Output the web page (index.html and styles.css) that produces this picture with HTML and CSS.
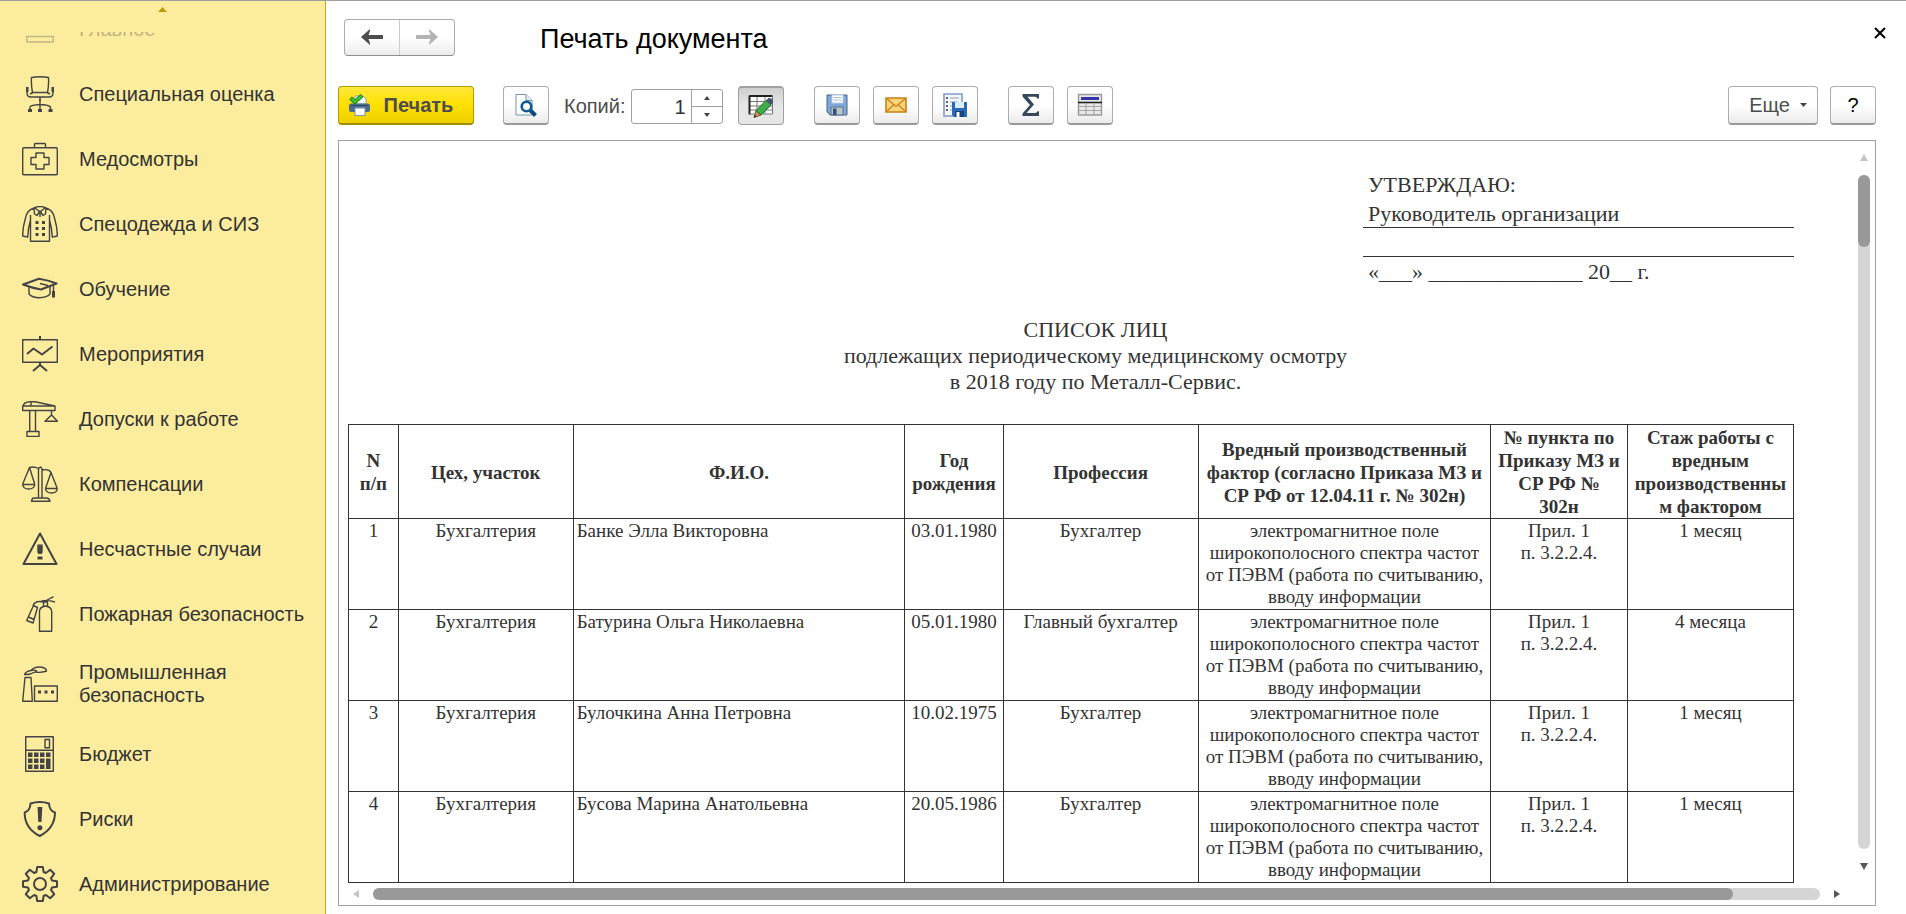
FILE: index.html
```html
<!DOCTYPE html>
<html lang="ru">
<head>
  <meta charset="UTF-8">
  <title>Печать документа</title>
  <link rel="stylesheet" href="styles.css">
</head>
<body>
  <nav class="sidebar">
    <button class="scroll-up" aria-label="Вверх"><svg width="9" height="5" viewBox="0 0 9 5"><path d="M0 5L4.500 0L9 5z"/></svg></button>
    <div class="menu">
      <a class="item faded" href="#">
        <svg viewBox="0 0 36 36"><path d="M5 2h26v16H5zM4.700 25.500h26.600V31H4.700z"/></svg>
        <span>Главное</span>
      </a>
      <a class="item" href="#">
        <svg viewBox="0 0 36 36"><path d="M9.500 1.500Q9 9 10.500 16.500H25.500Q27 9 26.500 1.500Q18 0 9.500 1.500zM5 12v5q0 4 4 4h18q4 0 4-4v-5M8 18l3-1.500M28 18l-3-1.500M18 21v8M17 24h2M8 33v-2Q9 29 18 28.500Q27 29 28.500 31v2M18 28v5"/><path class="fill" d="M4 11h2.500v5H4zM29.500 11H32v5h-2.500zM6 33h4v3H6zM16 33h4v3h-4zM26.500 33h4v3h-4z"/></svg>
        <span>Специальная оценка</span>
      </a>
      <a class="item" href="#">
        <svg viewBox="0 0 36 36"><path d="M1.700 6.700h32.600q1 0 1 1v25q0 1-1 1H1.700q-1 0-1-1v-25q0-1 1-1zM12.500 6V3.500q0-1 1-1h9q1 0 1 1V6M14 12h8v4.500h5v7h-5V28h-8v-4.500H9v-7h5z"/></svg>
        <span>Медосмотры</span>
      </a>
      <a class="item" href="#">
        <svg viewBox="0 0 36 36"><path d="M12 2Q5 4 3.500 12Q.500 22 .700 30l5 1Q6 22 8.500 14M24 2Q31 4 32.500 12Q35.500 22 35.300 30l-5 1Q30 22 27.500 14M8.500 9v26.300h19V9M12 2q6-3 12 0M12 2l.500 6 2.500 1.500 3-4.500 3 4.500L23.500 8 24 2M13 2l5 4 5-4M18 6v5"/><path class="fill" d="M13.500 15h3v3h-3zM20 15h3v3h-3zM13.500 21h3v3h-3zM20 21h3v3h-3zM13.500 27h3v3h-3zM20 27h3v3h-3z"/></svg>
        <span>Спецодежда и СИЗ</span>
      </a>
      <a class="item" href="#">
        <svg viewBox="0 0 36 36"><path class="bold" d="M1 13.500L17 7.700Q26 9 34.500 12.500L19 18.500Q10 17 1 13.500z"/><path d="M7 16v7q3 3.700 10.500 3.700Q25 26.500 28 23v-7.500M18 12.500l8 2M31.500 14.500V20"/><path class="fill" d="M30 20h3v6.500h-3z"/></svg>
        <span>Обучение</span>
      </a>
      <a class="item" href="#">
        <svg viewBox="0 0 36 36"><path d="M.700 3.700h34.600v22.600H.700z"/><path class="bold" d="M18 0v3.500M18 26.500v3M11 35l7-6 7 6M5 18l6.500-5.500 8.500 6 10.500-8"/></svg>
        <span>Мероприятия</span>
      </a>
      <a class="item" href="#">
        <svg viewBox="0 0 36 36"><path d="M.700 5h32.300v4.500H.700zM1 5Q2 1 8 .700h5L33 5M9 1v4M7.700 9.500v21M13.500 9.500v21M5 30.500h12v5H5zM29.500 9.500v4.500L23 20.300h12.500L29.500 14"/></svg>
        <span>Допуски к работе</span>
      </a>
      <a class="item" href="#">
        <svg viewBox="0 0 36 36"><path d="M16.500 32V2.500l1.800-1.500L20 2.500V32M12 32h12.500q3 0 3.500 3.300H9.500Q10 32 12 32zM16.500 2.500Q12 0 7.500 1.500L.700 18M7.500 1.500L12.700 18M.700 18.500h12q-.500 4.500-6 4.500t-6-4.500zM20 4q7-1.500 9 2.500l-5.500 16M29 6.500l6.300 16M23.500 22.500h11.800q-.300 4.500-5.800 4.500t-6-4.500z"/></svg>
        <span>Компенсации</span>
      </a>
      <a class="item" href="#">
        <svg viewBox="0 0 36 36"><path class="bold" d="M18 2.500L34.500 33H1.500z"/><path class="fill" d="M15.300 13.500h5.400V21l-1 2h-3.400l-1-2zM15.500 25.500h5v3h-5z"/></svg>
        <span>Несчастные случаи</span>
      </a>
      <a class="item" href="#">
        <svg viewBox="0 0 36 36"><path d="M17.500 35.300V15.500Q17.500 11 23.500 10Q29.700 11 29.700 15.500v19.800zM21.500 10V6h4v4M4.700 24.500L11.500 9.500l4 2L11 27zM6.500 21l5.500 2.500M11 9.500Q13 4 21.500 6L31.500.700M19 5.500Q24 3 33 6"/></svg>
        <span>Пожарная безопасность</span>
      </a>
      <a class="item" href="#">
        <svg viewBox="0 0 36 36"><path d="M3 11.500h6L10.300 35.300H.700zM12.500 20h22.800v15.300H12.500zM2.500 8.500Q4 5 9 4.500Q12 .700 18 1Q24.500 1.500 24.500 5Q19 7 13 6Q8 9 2.500 8.500zM9 4.500q4-1 6 .500"/><path class="fill" d="M16 24.500h3v3h-3zM22.500 24.500h3v3h-3zM29 24.500h3v3h-3z"/></svg>
        <span>Промышленная безопасность</span>
      </a>
      <a class="item" href="#">
        <svg viewBox="0 0 36 36"><path d="M3.700 .700h27.600v34.600H3.700zM4 14.300h27M23 3.500h4.500v8.300H23z"/><path class="fill" d="M6 16.500h4.500v4.500H6zM12 16.500h4.500v4.500H12zM18 16.500h4.500v4.500H18zM24 16.500h4.500v4.500H24zM6 22.500h4.500V27H6zM12 22.500h4.500V27H12zM18 22.500h4.500V27H18zM24 22.500h4.500V33H24zM6 28.500h4.500V33H6zM12 28.500h4.500V33H12zM18 28.500h4.500V33H18z"/></svg>
        <span>Бюджет</span>
      </a>
      <a class="item" href="#">
        <svg viewBox="0 0 36 36"><path class="bold" d="M17.700 35Q2.500 27 2.700 11.500Q8 10 8.500 2.500Q18-.500 27 2.500Q27.500 10 33 11.500Q33 27 17.700 35z"/><path class="fill" d="M15.500 6h4.800l-.800 15h-3.200z"/><circle class="fill" cx="17.900" cy="26.800" r="2.500"/></svg>
        <span>Риски</span>
      </a>
      <a class="item" href="#">
        <svg viewBox="0 0 36 36"><path class="bold" d="M14.400 6L15.200 1H20.800L21.600 6L23.900 7L28.200 3.800L32.200 7.800L29 12.100L30 14.400L35 15.200V20.800L30 21.600L29 23.900L32.200 28.200L28.200 32.200L23.900 29L21.600 30L20.800 35H15.200L14.400 30L12.100 29L7.800 32.200L3.800 28.200L7 23.900L6 21.600L1 20.800V15.200L6 14.400L7 12.100L3.800 7.800L7.800 3.800L12.100 7z"/><circle class="bold" cx="18" cy="18" r="6"/></svg>
        <span>Администрирование</span>
      </a>
    </div>
  </nav>

  <main class="content">
    <header class="header">
      <div class="history">
        <button aria-label="Назад"><svg width="22" height="16" viewBox="0 0 22 16"><path fill="#4d4d4d" d="M0 8l9-8v2L7.500 6H22v4H7.500L9 14v2z"/></svg></button>
        <button aria-label="Вперед"><svg width="22" height="16" viewBox="0 0 22 16"><path fill="#b3b3b3" d="M22 8l-9-8v2l1.500 4H0v4h14.500L13 14v2z"/></svg></button>
      </div>
      <h1>Печать документа</h1>
      <button class="close" aria-label="Закрыть"><svg width="12" height="12" viewBox="0 0 12 12"><path d="M1 1l10 10M11 1L1 11" stroke="#000" stroke-width="2"/></svg></button>
    </header>

    <div class="toolbar">
      <button class="btn print">
        <svg width="22" height="22" viewBox="0 0 22 22"><path d="M6 10V2h8l3 3v5z" fill="#fff" stroke="#8aa0b5"/><rect y="9.500" width="21" height="8.500" rx="2" fill="#4a6c92"/><path d="M2 11.500h17" stroke="#2c4868"/><path d="M6 14h10v7.500H6z" fill="#fff" stroke="#7c93ab"/><path d="M1.500 4l4.500 4 7-6.500" fill="none" stroke="#1c7c12" stroke-width="4"/><path d="M2 4.300l4 3.500 6.500-6" fill="none" stroke="#3fc52e" stroke-width="2.400"/></svg>
        Печать
      </button>
      <button class="btn preview" aria-label="Просмотр">
        <svg width="22" height="24" viewBox="0 0 22 24"><path d="M1 1.500h10l6 6v14.500H1z" fill="#fff" stroke="#7590ad"/><path d="M11 1.500v6h6" fill="#e8eef5" stroke="#7590ad"/><path d="M15 17l5.500 5.500" stroke="#0c4a7e" stroke-width="4"/><circle cx="11.500" cy="13.500" r="4.800" fill="#fff" stroke="#0c5a94" stroke-width="2.600"/></svg>
      </button>
      <label for="copies">Копий:</label>
      <div class="spinner">
        <input id="copies" type="text" value="1">
        <div class="steps">
          <button aria-label="Больше"><svg width="6" height="4" viewBox="0 0 6 4"><path d="M0 4l3-4 3 4z"/></svg></button>
          <button aria-label="Меньше"><svg width="6" height="4" viewBox="0 0 6 4"><path d="M0 0l3 4 3-4z"/></svg></button>
        </div>
      </div>
      <button class="btn pressed" aria-label="Редактирование">
        <svg width="26" height="24" viewBox="0 0 26 24"><path d="M1.500 2h23v18h-23z" fill="#fff"/><path d="M2 7.500h22M2 12h22M2 16h22M9 2v18M17 2v18" stroke="#777"/><path d="M1.500 2h23M1.500 1.500v19" stroke="#222" stroke-width="2"/><path d="M1 20h10M24.500 2v18H14" fill="none" stroke="#777"/><path d="M6 23.500l2-7 5 4.500z" fill="#c9915c" stroke="#7a5432"/><path d="M8 16.500L18 6.500l5 4.500-10 10z" fill="#3fae49" stroke="#1f6e2a"/><path d="M18 6.500l2.500-2.500q3-.500 4 1.500l.500 3-2 2.500z" fill="#46566a"/><path d="M6 23.500l.800-2.500 1.700 1.500z" fill="#222"/></svg>
      </button>
      <div class="group">
        <button class="btn" aria-label="Сохранить">
          <svg width="22" height="22" viewBox="0 0 22 22"><path d="M1 1h20v20H4l-3-3z" fill="#7ea8d8" stroke="#44668f"/><path d="M6 1h11v8H6z" fill="#fff" stroke="#b9cde4"/><path d="M7.500 3.500h8M7.500 6h8" stroke="#a9bdd2"/><path d="M5 13h12v8H5z" fill="#bcc4cc" stroke="#5c718a"/><path d="M7 14.500h3.500V21H7z" fill="#33507a"/></svg>
        </button>
        <button class="btn" aria-label="Отправить">
          <svg width="22" height="16" viewBox="0 0 22 16"><path d="M1 1h20v14H1z" fill="#ffd37a" stroke="#c98316" stroke-width="1.600"/><path d="M1.500 1.500l9.500 8 9.500-8M1.500 14.500L8.500 8M20.500 14.500L13.500 8" fill="none" stroke="#c98316" stroke-width="1.300"/></svg>
        </button>
        <button class="btn" aria-label="Сохранить копию">
          <svg width="26" height="24" viewBox="0 0 26 24"><path d="M2 1h18v22H2z" fill="#f3f7fc" stroke="#7f9cc4" stroke-width="1.600"/><path d="M4 5h2M4 9h2M4 13h2M4 17h2" stroke="#333" stroke-width="1.500"/><path d="M8 5h9M8 9h8M8 13h3M8 17h2" stroke="#8c9ab0"/><path d="M10 9h15v15H12l-2-2z" fill="#2868b4"/><path d="M13 9h9v6h-9z" fill="#dcebfa"/><path d="M13 18h9v6h-9z" fill="#17457f"/><path d="M14.500 19h3v5h-3z" fill="#fff"/></svg>
        </button>
      </div>
      <div class="group">
        <button class="btn" aria-label="Сумма">
          <svg width="18" height="22" viewBox="0 0 18 22"><path d="M.500 0H17v4.500h-1.800q-.200-1.700-2.200-1.700H5.500L12 10.500 4.500 19H13q2.200 0 2.500-1.800H17V22H.500v-2.500l7.500-8.500L.500 2.500z" fill="#34495e"/></svg>
        </button>
        <button class="btn" aria-label="Таблица">
          <svg width="26" height="24" viewBox="0 0 26 24"><path d="M1.500 1.500h23v20.500h-23z" fill="#e8e8e8" stroke="#9a9a9a" stroke-width="1.400"/><path d="M4 4h18v3H4z" fill="#3434a8"/><path d="M1 9.500h24" stroke="#222" stroke-width="1.600"/><path d="M2 13.500h22M2 17.500h22M9 10v12M17 10v12" stroke="#a8a8a8" stroke-width="1.200"/></svg>
        </button>
      </div>
      <div class="right">
        <button class="btn more">Еще <svg width="7" height="4" viewBox="0 0 7 4"><path d="M0 0h7L3.500 4z" fill="#444"/></svg></button>
        <button class="btn help">?</button>
      </div>
    </div>

    <section class="viewer">
      <div class="sheet">
        <div class="approve">
          <p>УТВЕРЖДАЮ:</p>
          <p class="line">Руководитель организации</p>
          <p class="line"></p>
          <p>«___» ______________ 20__ г.</p>
        </div>
        <h2>СПИСОК ЛИЦ<br>подлежащих периодическому медицинскому осмотру<br>в 2018 году по Металл-Сервис.</h2>
        <table>
          <colgroup>
            <col class="c-num"><col class="c-shop"><col class="c-name"><col class="c-year">
            <col class="c-job"><col class="c-factor"><col class="c-point"><col class="c-term">
          </colgroup>
          <thead>
            <tr>
              <th>N<br>п/п</th>
              <th>Цех, участок</th>
              <th>Ф.И.О.</th>
              <th>Год рождения</th>
              <th>Профессия</th>
              <th>Вредный производственный фактор (согласно Приказа МЗ и СР РФ от 12.04.11 г. № 302н)</th>
              <th>№ пункта по Приказу МЗ и СР РФ №<br>302н</th>
              <th>Стаж работы с вредным производственным фактором</th>
            </tr>
          </thead>
          <tbody>
            <tr>
              <td>1</td>
              <td>Бухгалтерия</td>
              <td class="name">Банке Элла Викторовна</td>
              <td>03.01.1980</td>
              <td>Бухгалтер</td>
              <td>электромагнитное поле широкополосного спектра частот от ПЭВМ (работа по считыванию, вводу информации</td>
              <td>Прил. 1<br>п. 3.2.2.4.</td>
              <td>1 месяц</td>
            </tr>
            <tr>
              <td>2</td>
              <td>Бухгалтерия</td>
              <td class="name">Батурина Ольга Николаевна</td>
              <td>05.01.1980</td>
              <td>Главный бухгалтер</td>
              <td>электромагнитное поле широкополосного спектра частот от ПЭВМ (работа по считыванию, вводу информации</td>
              <td>Прил. 1<br>п. 3.2.2.4.</td>
              <td>4 месяца</td>
            </tr>
            <tr>
              <td>3</td>
              <td>Бухгалтерия</td>
              <td class="name">Булочкина Анна Петровна</td>
              <td>10.02.1975</td>
              <td>Бухгалтер</td>
              <td>электромагнитное поле широкополосного спектра частот от ПЭВМ (работа по считыванию, вводу информации</td>
              <td>Прил. 1<br>п. 3.2.2.4.</td>
              <td>1 месяц</td>
            </tr>
            <tr>
              <td>4</td>
              <td>Бухгалтерия</td>
              <td class="name">Бусова Марина Анатольевна</td>
              <td>20.05.1986</td>
              <td>Бухгалтер</td>
              <td>электромагнитное поле широкополосного спектра частот от ПЭВМ (работа по считыванию, вводу информации</td>
              <td>Прил. 1<br>п. 3.2.2.4.</td>
              <td>1 месяц</td>
            </tr>
          </tbody>
        </table>
      </div>
      <div class="vbar">
        <svg width="8" height="7" viewBox="0 0 8 7"><path d="M0 7l4-7 4 7z" fill="#c4c4c4"/></svg>
        <div class="track"><div class="thumb"></div></div>
        <svg width="8" height="7" viewBox="0 0 8 7"><path d="M0 0l4 7 4-7z" fill="#555"/></svg>
      </div>
      <div class="hbar">
        <svg width="6" height="8" viewBox="0 0 6 8"><path d="M6 0v8L0 4z" fill="#c4c4c4"/></svg>
        <div class="track"><div class="thumb"></div></div>
        <svg width="6" height="8" viewBox="0 0 6 8"><path d="M0 0v8l6-4z" fill="#555"/></svg>
      </div>
    </section>
  </main>
</body>
</html>
```
FILE: styles.css
```css
* {
  box-sizing: border-box;
}

body {
  margin: 0;
  min-height: 100vh;
  display: flex;
  border-top: 1px solid #a0a0a0;
  background: #fff;
  font-family: "Liberation Sans", Arial, sans-serif;
  font-size: 20px;
  line-height: 23px;
  color: #333;
}

button {
  font: inherit;
  color: inherit;
  padding: 0;
  border: none;
  background: none;
  cursor: pointer;
}

/* sidebar */
.sidebar {
  flex: 0 0 326px;
  background: #fbec9e;
  border-right: 1px solid #c4a824;
}

.scroll-up {
  display: flex;
  width: 100%;
  height: 31px;
  padding-top: 6px;
  justify-content: center;
  align-items: flex-start;
}

.scroll-up svg {
  fill: #c09a10;
}

.menu {
  overflow: hidden;
}

.item {
  display: flex;
  align-items: center;
  gap: 21px;
  min-height: 65px;
  padding: 14px 16px 15px 22px;
  color: #333;
  text-decoration: none;
}

.item svg {
  flex: none;
  width: 36px;
  height: 36px;
  fill: none;
  stroke: #444;
  stroke-width: 1.4;
  stroke-linejoin: round;
}

.item svg .bold {
  stroke-width: 2;
}

.item svg .fill {
  fill: #444;
  stroke: none;
}

/* scrolled half out of view */
.item.faded {
  margin-top: -35px;
  opacity: 0.3;
}

/* header */
.content {
  flex: 1;
  min-width: 0;
  padding: 0 30px 9px 12px;
}

.header {
  display: flex;
  align-items: center;
  height: 72px;
  padding: 0 0 0 6px;
}

.history {
  display: flex;
  height: 37px;
  border: 1px solid #adadad;
  border-bottom-color: #8e8e8e;
  border-radius: 4px;
  background: linear-gradient(#fff 50%, #ececec);
}

.history button {
  display: flex;
  align-items: center;
  justify-content: center;
  width: 54px;
}

.history button + button {
  width: 55px;
  border-left: 1px solid #ccc;
}

h1 {
  margin: 0 auto 0 85px;
  padding-top: 4px;
  font-size: 27px;
  line-height: 32px;
  font-weight: normal;
  color: #000;
}

.close {
  display: flex;
  align-self: flex-start;
  padding: 26px 0 8px 8px;
  margin-right: -10px;
}

/* toolbar */
.toolbar {
  display: flex;
  align-items: center;
  margin: 13px 0 15px;
}

.btn {
  display: flex;
  align-items: center;
  justify-content: center;
  width: 46px;
  height: 39px;
  border: 1px solid #adadad;
  border-bottom: 2px solid #999;
  border-radius: 4px;
  background: linear-gradient(#fff 50%, #ebebeb);
}

.print {
  width: 136px;
  gap: 13px;
  padding-right: 10px;
  font-weight: bold;
  color: #4d4d4d;
  border-color: #b39b00;
  border-bottom-color: #a08b00;
  background: linear-gradient(#ffe83c, #ffe000 50%, #ecd000);
}

.preview {
  margin-left: 29px;
}

label {
  margin: 2px 5px 0 15px;
  color: #4d4d4d;
}

.spinner {
  display: flex;
  width: 92px;
  height: 35px;
  margin: 1px 15px 0 0;
  border: 1px solid #a0a0a0;
  border-radius: 3px;
}

.spinner input {
  flex: 1;
  min-width: 0;
  padding: 2px 5px 0;
  border: none;
  background: none;
  font: inherit;
  color: #333;
  text-align: right;
}

.steps {
  display: flex;
  flex-direction: column;
  width: 31px;
  border-left: 1px solid #a0a0a0;
}

.steps button {
  flex: 1;
  display: flex;
  align-items: center;
  justify-content: center;
  fill: #444;
}

.steps button + button {
  border-top: 1px solid #a0a0a0;
}

.pressed {
  border: 1px solid #a0a0a0;
  border-top-width: 2px;
  background: linear-gradient(#cfcfcf, #e6e6e6 50%);
}

.group {
  display: flex;
  gap: 13px;
  margin-left: 30px;
}

.right {
  display: flex;
  gap: 12px;
  margin-left: auto;
}

.more {
  width: 90px;
  gap: 10px;
  padding-left: 10px;
  color: #4d4d4d;
}

.help {
  color: #000;
}

/* printed form */
.viewer {
  display: grid;
  grid-template-columns: 1fr 22px;
  grid-template-rows: auto 22px;
  border: 1px solid #a0a0a0;
}

.sheet {
  padding: 29px 59px 0 9px;
  font-family: "Liberation Serif", "Times New Roman", serif;
}

.approve {
  width: 431px;
  margin-left: auto;
  font-size: 22px;
  line-height: 28px;
}

.approve p {
  height: 29px;
  margin: 0;
  padding: 1px 5px 0;
  border-bottom: 1px solid transparent;
  white-space: pre;
}

.approve .line {
  border-color: #333;
}

h2 {
  margin: 31px 0 29px 49px;
  font-size: 22px;
  line-height: 26px;
  font-weight: normal;
  text-align: center;
}

table {
  width: 100%;
  table-layout: fixed;
  border-collapse: collapse;
  font-size: 19px;
  line-height: 22px;
}

.c-num { width: 3.45%; }
.c-shop { width: 12.1%; }
.c-name { width: 22.95%; }
.c-year { width: 6.8%; }
.c-job { width: 13.5%; }
.c-factor { width: 20.25%; }
.c-point { width: 9.45%; }
.c-term { width: 11.5%; }

th,
td {
  border: 1px solid #333;
  text-align: center;
}

th {
  padding: 1px 3px 0;
  line-height: 23px;
  word-break: break-word;
}

td {
  padding: 1px 3px;
  vertical-align: top;
}

td.name {
  text-align: left;
}

/* scrollbars */
.vbar,
.hbar {
  display: flex;
  align-items: center;
}

.track {
  flex: 1;
  border-radius: 6px;
  background: #d5d5d5;
}

.thumb {
  border-radius: 6px;
  background: #999;
}

.vbar {
  flex-direction: column;
  gap: 14px;
  padding: 13px 0;
}

.vbar .track {
  width: 12px;
}

.vbar .thumb {
  height: 72px;
}

.hbar {
  gap: 14px;
  padding: 0 13px 0 14px;
}

.hbar .track,
.hbar .thumb {
  height: 12px;
}

.hbar .thumb {
  width: 94%;
}
```
